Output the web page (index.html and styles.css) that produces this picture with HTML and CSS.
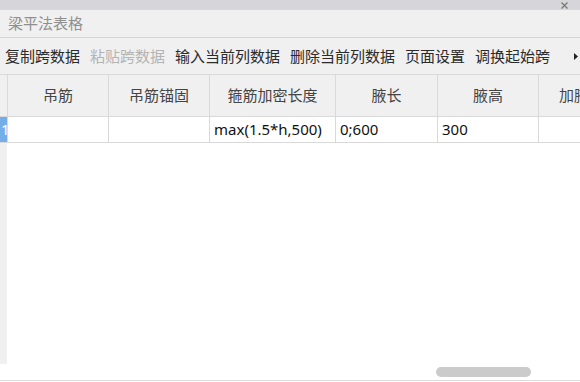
FILE: index.html
```html
<!DOCTYPE html>
<html>
<head>
    <meta charset="UTF-8">
    <title>梁平法表格</title>
    <link rel="stylesheet" href="styles.css">
</head>
<body>
    <div id="window">
        <div class="topbar">
            <svg class="close" width="7" height="7" viewBox="0 0 7 7">
                <path d="M0.5 0.5 L6.5 6.5 M6.5 0.5 L0.5 6.5" stroke="#777" stroke-width="1.2"/>
            </svg>
        </div>
        <div class="title">梁平法表格</div>
        <div class="toolbar">
            <span class="tool">复制跨数据</span>
            <span class="tool disabled">粘贴跨数据</span>
            <span class="tool">输入当前列数据</span>
            <span class="tool">删除当前列数据</span>
            <span class="tool">页面设置</span>
            <span class="tool">调换起始跨</span>
            <svg class="more" width="5" height="7" viewBox="0 0 5 7">
                <path d="M0 0 L4 3.5 L0 7 Z" fill="#222"/>
            </svg>
        </div>
        <div class="sheet">
            <div class="grid">
                <div class="cell rowhead"></div>
                <div class="cell head">吊筋</div>
                <div class="cell head">吊筋锚固</div>
                <div class="cell head">箍筋加密长度</div>
                <div class="cell head">腋长</div>
                <div class="cell head">腋高</div>
                <div class="cell head">加腋钢筋</div>

                <div class="cell rowhead current">1</div>
                <div class="cell"></div>
                <div class="cell"></div>
                <div class="cell">max(1.5*h,500)</div>
                <div class="cell">0;600</div>
                <div class="cell">300</div>
                <div class="cell"></div>
            </div>
            <div class="filler">
                <div class="strip"></div>
            </div>
            <div class="hscroll">
                <div class="thumb"></div>
            </div>
        </div>
    </div>
</body>
</html>
```

FILE: styles.css
```css
body {
    margin: 0;
    padding: 0;
    width: 580px;
    height: 382px;
    overflow: hidden;
    background: #fff;
    font-family: "Noto Sans", "Noto Sans CJK SC", sans-serif;
    font-size: 15px;
}

#window {
    display: flex;
    flex-direction: column;
    height: 382px;
}

.topbar {
    height: 10px;
    background: #d6d6da;
    display: flex;
    justify-content: flex-end;
    align-items: center;
    padding-right: 12px;
}

.close {
    display: block;
}

.title {
    height: 27px;
    line-height: 27px;
    background: #f0f0f0;
    border-bottom: 1px solid #d4d4d4;
    padding-left: 8px;
    color: #8f8f8f;
}

.toolbar {
    height: 36px;
    background: #f0f0f0;
    display: flex;
    align-items: center;
    gap: 10px;
    padding-left: 5px;
    white-space: nowrap;
    color: #2b2b2b;
    position: relative;
}

.tool {
    line-height: 36px;
}

.tool.disabled {
    color: #b4b4b4;
}

.more {
    position: absolute;
    right: 1px;
    top: 15px;
}

.sheet {
    flex: 1;
    display: flex;
    flex-direction: column;
    overflow: hidden;
}

.grid {
    display: grid;
    grid-template-columns: 7px 100px 100px 125px 101px 100px 100px;
    grid-template-rows: 41px 25px;
    gap: 1px;
    background: #d9d9d9;
    border-top: 1px solid #d9d9d9;
    border-bottom: 1px solid #d9d9d9;
    width: max-content;
}

.cell {
    background: #fff;
    color: #111;
    padding-left: 4px;
    line-height: 25px;
    white-space: nowrap;
    overflow: hidden;
}

.cell.head {
    background: #f0f0f0;
    color: #444;
    text-align: center;
    padding-left: 0;
    line-height: 41px;
}

.cell.rowhead {
    background: #f0f0f0;
    padding-left: 0;
}

.cell.rowhead.current {
    background: #74aee8;
    color: #fff;
    padding-left: 1px;
}

.filler {
    height: 221px;
    display: flex;
}

.strip {
    width: 7px;
    background: #f0f0f0;
}

.hscroll {
    height: 16px;
    border-bottom: 1px solid #dcdcdc;
    display: flex;
    align-items: center;
}

.thumb {
    margin-left: 436px;
    width: 95px;
    height: 10px;
    border-radius: 5px;
    background: #cbcbcb;
}
```
